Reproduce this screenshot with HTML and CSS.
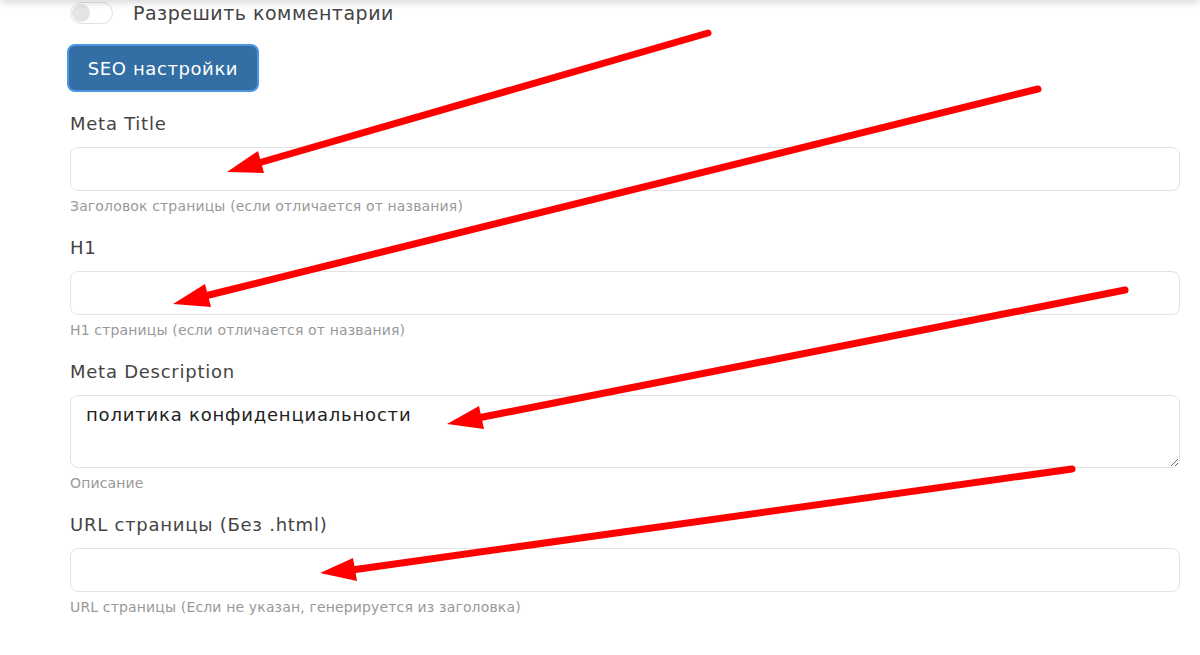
FILE: index.html
```
<!DOCTYPE html>
<html lang="ru">
<head>
  <meta charset="UTF-8" />
  <title>SEO настройки</title>
  <link rel="stylesheet" href="styles.css">
</head>
<body>

  <!-- тень от шапки -->
  <div class="top-shadow"></div>

  <div class="form">
    <label class="switch-row">
      <span class="switch"><span class="knob"></span></span>
      <span class="switch-text">Разрешить комментарии</span>
    </label>

    <button class="seo-btn">SEO настройки</button>

    <div class="field">
      <div class="label">Meta Title</div>
      <input type="text" class="input" />
      <div class="help">Заголовок страницы (если отличается от названия)</div>
    </div>

    <div class="field">
      <div class="label">H1</div>
      <input type="text" class="input" />
      <div class="help">H1 страницы (если отличается от названия)</div>
    </div>

    <div class="field">
      <div class="label">Meta Description</div>
      <textarea class="input area">политика конфиденциальности</textarea>
      <div class="help">Описание</div>
    </div>

    <div class="field">
      <div class="label">URL страницы (Без .html)</div>
      <input type="text" class="input" />
      <div class="help">URL страницы (Если не указан, генерируется из заголовка)</div>
    </div>
  </div>

  <!-- стрелки поверх формы -->
  <svg class="arrows" width="1200" height="655" viewBox="0 0 1200 655">
    <g stroke="#ff0000" stroke-width="7" stroke-linecap="round" fill="none">
      <line x1="708" y1="33" x2="255" y2="164" />
      <line x1="1038" y1="89" x2="205" y2="296" />
      <line x1="1125" y1="290" x2="478" y2="418" />
      <line x1="1072" y1="469" x2="352" y2="570" />
    </g>
    <g fill="#ff0000">
      <polygon points="227,172 258,151 264,173" />
      <polygon points="173,304 205,284 211,307" />
      <polygon points="447,424 479,406 484,429" />
      <polygon points="320,573 353,558 357,581" />
    </g>
  </svg>

</body>
</html>
```

FILE: styles.css
```
body {
  margin: 0;
  background: #fff;
  font-family: "DejaVu Sans", "Open Sans", sans-serif;
  color: #444;
  position: relative;
  height: 655px;
  overflow: hidden;
}

.top-shadow {
  position: fixed;
  top: -10px;
  left: 0;
  right: 0;
  height: 10px;
  background: #fff;
  box-shadow: 0 2px 8px rgba(0, 0, 0, 0.18);
  z-index: 2;
}

.form {
  width: 1110px;
  padding: 1px 0 0 70px;
  display: flex;
  flex-direction: column;
  align-items: flex-start;
}

.switch-row {
  display: flex;
  align-items: center;
  gap: 20px;
  height: 24px;
}

.switch {
  width: 40px;
  height: 20px;
  border: 1px solid #e2e2e2;
  border-radius: 11px;
  background: #fff;
  display: flex;
  align-items: center;
  padding-left: 1px;
}

.knob {
  width: 18px;
  height: 18px;
  border-radius: 50%;
  background: #e4e4e4;
}

.switch-text {
  font-size: 19px;
  letter-spacing: 0.5px;
  color: #444;
}

.seo-btn {
  margin-top: 19px;
  margin-left: -3px;
  width: 192px;
  height: 48px;
  background: #336fa5;
  border: 2px solid #4d97e0;
  border-radius: 8px;
  color: #fff;
  font-family: inherit;
  font-size: 18px;
  letter-spacing: 0.6px;
  padding: 0;
}

.field {
  width: 100%;
  margin-top: 20px;
  margin-bottom: 1px;
}

.label {
  font-size: 18px;
  letter-spacing: 0.75px;
  line-height: 24px;
  margin-bottom: 11px;
}

.input {
  display: block;
  box-sizing: border-box;
  width: 100%;
  height: 44px;
  border: 1px solid #e3e3e3;
  border-radius: 8px;
  background: #fff;
  font-family: inherit;
  font-size: 18px;
  letter-spacing: 0.8px;
  color: #222;
  padding: 0 15px;
}

.area {
  height: 73px;
  padding: 8px 15px;
  resize: vertical;
}

.help {
  margin-top: 6px;
  font-size: 14px;
  letter-spacing: 0.15px;
  line-height: 18px;
  color: #999;
}

.arrows {
  position: absolute;
  top: 0;
  left: 0;
  pointer-events: none;
}
```
